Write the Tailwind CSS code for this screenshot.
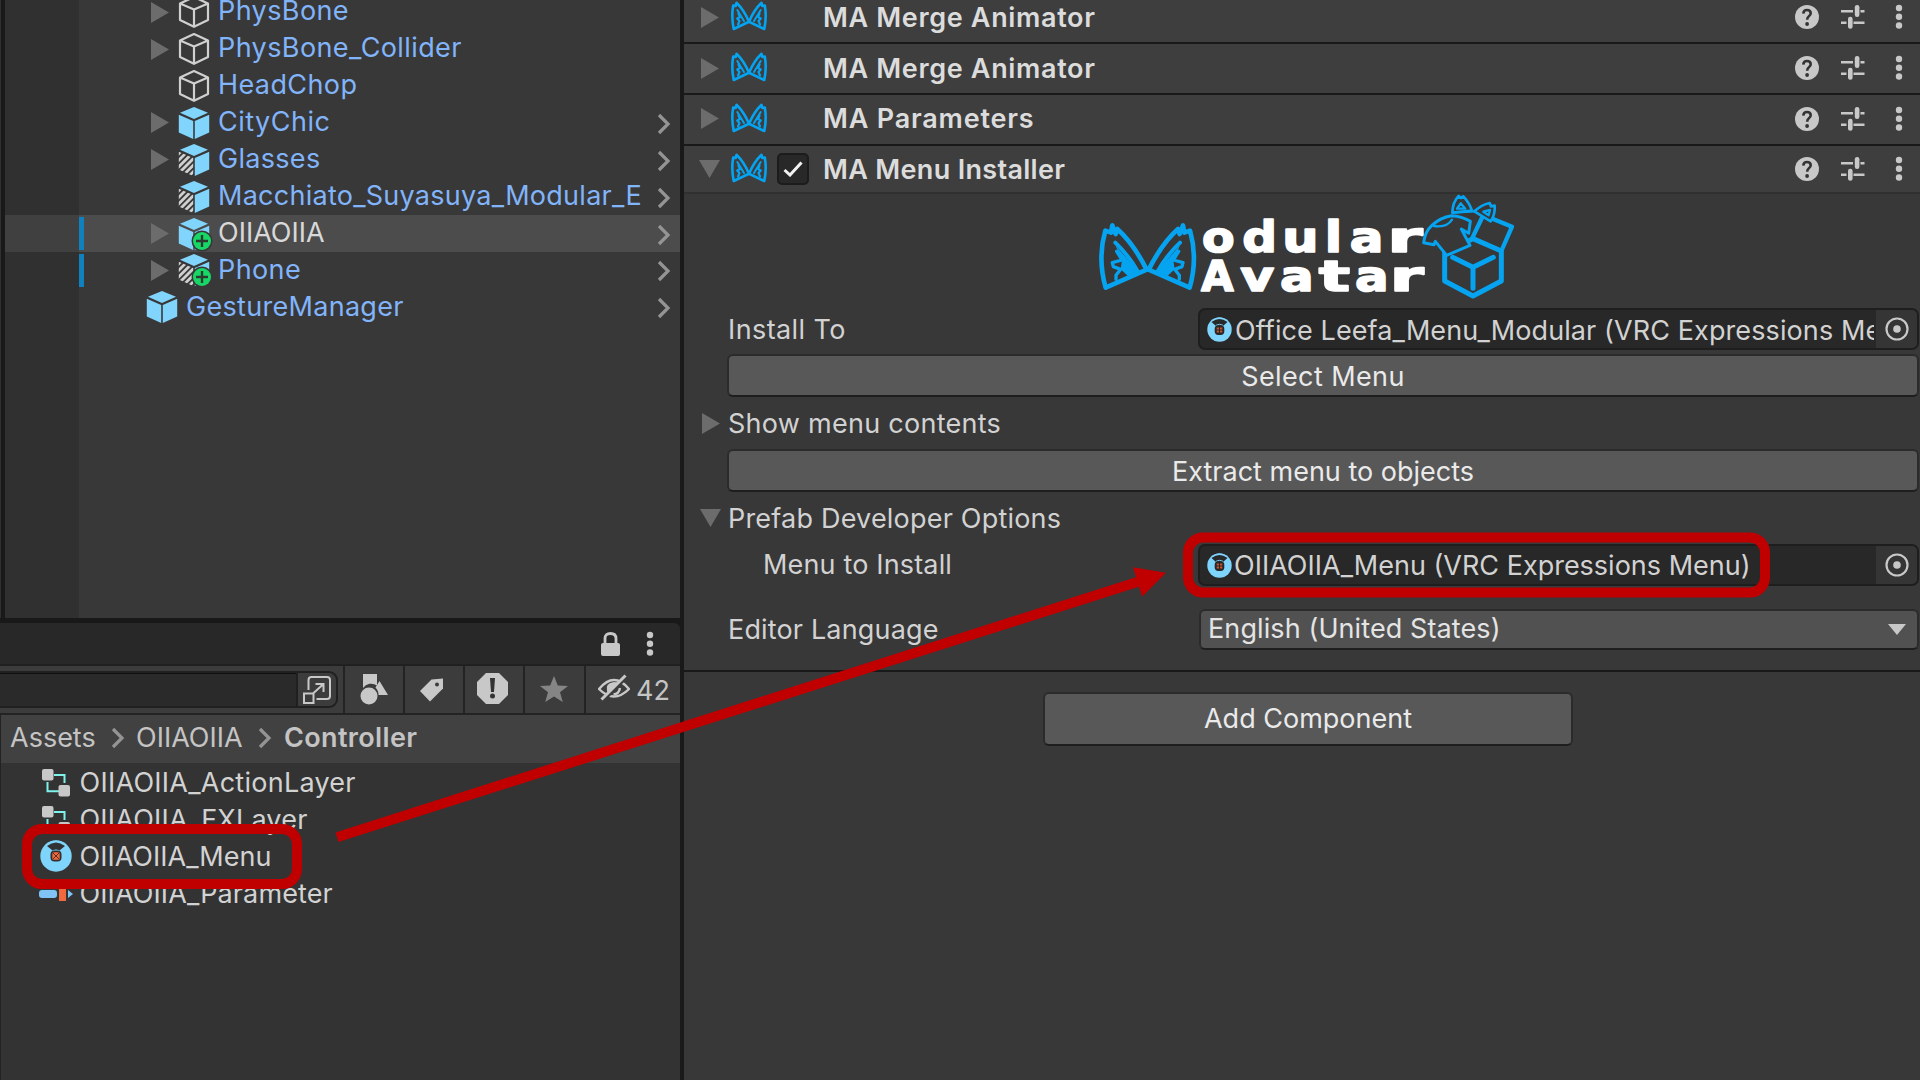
<!DOCTYPE html>
<html lang="en">
<head>
<meta charset="utf-8">
<title>Unity Editor</title>
<script src="https://cdn.jsdelivr.net/npm/@tailwindcss/browser@4"></script>
</head>
<body class="w-[1920px] h-[1080px] overflow-hidden bg-[#383838] font-['Inter',sans-serif] text-[27px] leading-none text-[#d2d2d2]">
<svg class="absolute w-0 h-0">
  <clipPath id="lf"><path d="M.8 8.800L15.200 15V33L.8 26.500Z"/></clipPath>
  <symbol id="tri" viewBox="0 0 18 21"><path d="M0 0L18 10.5L0 21Z" fill="#6c6c6c"/></symbol>
  <symbol id="trid" viewBox="0 0 21 18"><path d="M0 0H21L10.5 18Z" fill="#6c6c6c"/></symbol>
  <symbol id="chev" viewBox="0 0 14 22"><path d="M2 2L11 11L2 20" fill="none" stroke="#949494" stroke-width="3.2"/></symbol>
  <symbol id="cubeo" viewBox="0 0 32 34"><path d="M16 2L30 8.500V25L16 31.800L2 25V8.500ZM2 8.500L16 14.500L30 8.500M16 14.500V31.800" fill="none" stroke="#d0d0d0" stroke-width="2.200" stroke-linejoin="round"/></symbol>
  <symbol id="cube" viewBox="0 0 32 34"><path d="M16 1L30 6.800L16 13L2 6.800ZM.8 8.800L15.200 15V33L.8 26.500ZM16.800 15L31.200 8.800V26.500L16.800 33Z" fill="#81d5fd"/></symbol>
  <symbol id="cubev" viewBox="0 0 32 34"><path d="M16 1L30 6.800L16 13L2 6.800ZM16.800 15L31.200 8.800V26.500L16.800 33Z" fill="#81d5fd"/><path d="M-2 13.500L7 4.500M-3 21L13 5M-3 27.500L18 6.500M-2 33L20 11M3 34.500L20 17.500M9 35L22 22" clip-path="url(#lf)" stroke="#d0d0d0" stroke-width="2.700"/></symbol>
  <symbol id="plus" viewBox="0 0 22 22"><circle cx="11" cy="11" r="10.500" fill="#383838"/><circle cx="11" cy="11" r="9" fill="#17d866"/><path d="M11 5V17M5 11H17" stroke="#2c3a30" stroke-width="2.400"/></symbol>
  <symbol id="ear" viewBox="50 120 155 220"><g fill="none" stroke="#05a3f0" stroke-width="14" stroke-linejoin="round" stroke-linecap="round"><path d="M97 136L93 158L76 152Q52 235 77 323L200 269Q160 190 112 147L107 162Z"/><path d="M106 188Q145 225 172 272" stroke-width="12"/><path d="M110 214L126 240L97 248L100 260L122 268L108 286V298" stroke-width="10"/></g><path d="M106 196L176 276L146 290L122 268L126 240Z" fill="#05a3f0"/></symbol>
  <symbol id="ma" viewBox="50 124 306 212"><use href="#ear" x="50" y="120" width="155" height="220"/><use href="#ear" x="50" y="120" width="155" height="220" transform="translate(406 0) scale(-1 1)"/></symbol>
  <symbol id="mas" viewBox="0 0 36 30"><g id="hm" fill="none" stroke="#05a3f0" stroke-linejoin="round" stroke-linecap="round"><path d="M5.500 1.800L4.700 5L2.200 4.500Q.2 16 2.700 28L18 20.800Q13 9 5.500 1.800Z" stroke-width="2.600"/><path d="M6.300 9L13 20" stroke-width="2"/><path d="M7.500 12.500L9 16L6.200 17.500L8.500 20L7 23.500" stroke-width="2.200"/></g><use href="#hm" transform="translate(36 0) scale(-1 1)"/></symbol>
  <symbol id="help" viewBox="0 0 24 24"><circle cx="12" cy="12" r="12" fill="#c8c8c8"/><path d="M8.300 8.600Q8.500 5 12 5Q15.700 5 15.700 8.300Q15.700 10 13.900 11.300Q12.200 12.500 12.200 14.800" fill="none" stroke="#333" stroke-width="2.600"/><circle cx="12.100" cy="19" r="1.900" fill="#333"/></symbol>
  <symbol id="sld" viewBox="0 0 24 24"><path d="M0 6.300H12M19.500 6.300H23.500M0 17.800H5.500M12.500 17.800H23.500" stroke="#c8c8c8" stroke-width="2.400"/><rect x="13.800" y="0" width="4.600" height="12" rx="2.200" fill="#c8c8c8"/><rect x="7" y="11.800" width="4.600" height="12" rx="2.200" fill="#c8c8c8"/></symbol>
  <symbol id="dots" viewBox="0 0 8 26"><circle cx="4" cy="4" r="3.200" fill="#c8c8c8"/><circle cx="4" cy="12.700" r="3.200" fill="#c8c8c8"/><circle cx="4" cy="21.500" r="3.200" fill="#c8c8c8"/></symbol>
  <symbol id="menu" viewBox="0 0 32 32"><circle cx="16" cy="16" r="15.700" fill="#7fd4fc"/><path d="M7 6Q16 -1 25 6L19.500 10.500Q16 8.500 12.500 10.500Z" fill="#303234"/><path d="M6 4.700Q16 -2.500 26 4.700" fill="none" stroke="#7fd4fc" stroke-width="1.200"/><rect x="10.500" y="10.500" width="11" height="11" rx="4" fill="#303030"/><rect x="12.300" y="12.300" width="7.400" height="7.400" rx="1.500" fill="#f0683e"/><path d="M13 13L19 19M19 13L13 19" stroke="#5a3024" stroke-width="1"/></symbol>
  <symbol id="menus" viewBox="0 0 25 25"><circle cx="12.500" cy="12.500" r="12.200" fill="#7fd4fc"/><path d="M4.500 5Q12.500 -1 20.500 5L16 9H9Z" fill="#27292b"/><path d="M4.500 3.800Q12.500 -1.800 20.500 3.800" fill="none" stroke="#7fd4fc"/><path d="M9 8.300Q12.500 6.300 16 8.300" fill="none" stroke="#7fd4fc"/><rect x="7.700" y="8.300" width="9.600" height="9.600" rx="3.600" fill="#272727"/><path d="M9.700 10.500H12V12.500H9.700ZM13 10.500H15.300V12.500H13ZM9.700 13.500H12V15.500H9.700ZM13 13.500H15.300V15.500H13Z" fill="#c4532f"/></symbol>
  <symbol id="ctrl" viewBox="0 0 28 28"><path d="M12 6H22.500V14M5.500 13V22.300H17" fill="none" stroke="#7df3ec" stroke-width="2"/><rect x="0" y="0" width="11.500" height="11.500" rx="2" fill="#c8c8c8"/><rect x="16.500" y="16" width="11.500" height="11.500" rx="2" fill="#c8c8c8"/></symbol>
  <symbol id="pick" viewBox="0 0 24 24"><circle cx="12" cy="12" r="10.500" fill="none" stroke="#c8c8c8" stroke-width="2.200"/><circle cx="12" cy="12" r="3.800" fill="#c8c8c8"/></symbol>
</svg>

<div class="relative flex w-[1920px] h-[1080px] overflow-hidden">
  <!-- left column -->
  <div class="flex flex-col w-[680px] shrink-0">
    <!-- hierarchy -->
    <div class="flex h-[618px] overflow-hidden">
      <div class="w-px bg-[#303030]"></div><div class="w-[4px] bg-[#191919]"></div>
      <div class="flex-1 min-w-0 bg-[linear-gradient(to_right,#303030_74px,#383838_74px)]">
        <div class="-mt-[6.2px] text-[#82b4fa]">
          <div class="flex items-center h-[36.9px] pl-[146px]"><svg class="w-[18px] h-[21px]"><use href="#tri"/></svg><svg class="w-8 h-[34px] ml-[9px]"><use href="#cubeo"/></svg><span class="ml-[8px] pb-[3px] tracking-[0.4px]">PhysBone</span></div>
          <div class="flex items-center h-[36.9px] pl-[146px]"><svg class="w-[18px] h-[21px]"><use href="#tri"/></svg><svg class="w-8 h-[34px] ml-[9px]"><use href="#cubeo"/></svg><span class="ml-[8px] pb-[3px] tracking-[0.4px]">PhysBone_Collider</span></div>
          <div class="flex items-center h-[36.9px] pl-[173px]"><svg class="w-8 h-[34px]"><use href="#cubeo"/></svg><span class="ml-[8px] pb-[3px] tracking-[0.4px]">HeadChop</span></div>
          <div class="flex items-center h-[36.9px] pl-[146px] pr-[9.5px]"><svg class="w-[18px] h-[21px]"><use href="#tri"/></svg><svg class="w-8 h-[34px] ml-[9px]"><use href="#cube"/></svg><span class="ml-[8px] pb-[3px] tracking-[0.5px]">CityChic</span><svg class="w-[14px] h-[22px] ml-auto mt-[2px]"><use href="#chev"/></svg></div>
          <div class="flex items-center h-[36.9px] pl-[146px] pr-[9.5px]"><svg class="w-[18px] h-[21px]"><use href="#tri"/></svg><svg class="w-8 h-[34px] ml-[9px]"><use href="#cubev"/></svg><span class="ml-[8px] pb-[3px] tracking-[0.3px]">Glasses</span><svg class="w-[14px] h-[22px] ml-auto mt-[2px]"><use href="#chev"/></svg></div>
          <div class="flex items-center h-[36.9px] pl-[173px] pr-[9.5px]"><svg class="w-8 h-[34px]"><use href="#cubev"/></svg><span class="ml-[8px] pb-[3px] tracking-[0.26px]">Macchiato_Suyasuya_Modular_E</span><svg class="w-[14px] h-[22px] ml-auto mt-[2px]"><use href="#chev"/></svg></div>
          <div class="flex items-center h-[36.9px] pl-[74px] pr-[9.5px] bg-[linear-gradient(to_right,#404040_74px,#4c4c4c_74px)] text-[#d8d8d8]"><div class="w-[5px] h-[33px] bg-[#0f81be]"></div><svg class="w-[18px] h-[21px] ml-[67px]"><use href="#tri"/></svg><div class="relative w-8 h-[34px] ml-[9px]"><svg class="w-8 h-[34px]"><use href="#cube"/></svg><svg class="absolute left-[13px] top-[13px] w-[22px] h-[22px]"><use href="#plus"/></svg></div><span class="ml-[8px] pb-[3px]">OIIAOIIA</span><svg class="w-[14px] h-[22px] ml-auto mt-[2px]"><use href="#chev"/></svg></div>
          <div class="flex items-center h-[36.9px] pl-[74px] pr-[9.5px]"><div class="w-[5px] h-[33px] bg-[#0f81be]"></div><svg class="w-[18px] h-[21px] ml-[67px]"><use href="#tri"/></svg><div class="relative w-8 h-[34px] ml-[9px]"><svg class="w-8 h-[34px]"><use href="#cubev"/></svg><svg class="absolute left-[13px] top-[13px] w-[22px] h-[22px]"><use href="#plus"/></svg></div><span class="ml-[8px] pb-[2px] tracking-[0.4px]">Phone</span><svg class="w-[14px] h-[22px] ml-auto mt-[2px]"><use href="#chev"/></svg></div>
          <div class="flex items-center h-[36.9px] pl-[141px] pr-[9.5px]"><svg class="w-8 h-[34px]"><use href="#cube"/></svg><span class="ml-[8px] pb-[2px] tracking-[0.3px]">GestureManager</span><svg class="w-[14px] h-[22px] ml-auto mt-[2px]"><use href="#chev"/></svg></div>
        </div>
      </div>
    </div>
    <!-- project -->
    <div class="h-[5px] bg-[#191919]"></div>
    <div class="bg-[#191919]"><div class="flex items-center justify-end h-[43px] pr-[26px] gap-[26px] bg-[#282828] rounded-tr-[6px] border-b-2 border-[#202020]">
      <svg class="w-[19px] h-[24px]" viewBox="0 0 19 24"><path d="M4 12V6.500Q4 1.500 9.500 1.500T15 6.500V12" fill="none" stroke="#c8c8c8" stroke-width="2.800"/><rect y="11" width="19" height="13" rx="2" fill="#c8c8c8"/></svg>
      <svg class="w-2 h-[26px]"><use href="#dots"/></svg>
    </div></div>
    <div class="flex h-[49px] bg-[#3c3c3c] border-b-2 border-[#232323]">
      <div class="flex items-center w-[343px]"><div class="flex w-[338px] h-[37px] border-2 border-l-0 border-[#202020] rounded-r-[9px] bg-[#2a2a2a] overflow-hidden"><div class="w-[298px] border-r-2 border-[#202020] shadow-[inset_0_1px_0_#101010]"></div><div class="flex items-center justify-center flex-1 bg-[#3c3c3c]"><svg class="w-7 h-7" viewBox="0 0 28 28" fill="none" stroke="#c8c8c8" stroke-width="2"><path d="M5.500 14V4Q5.500 1 8.500 1H24Q27 1 27 4V20Q27 23 24 23H13.500M1 17.500H10.500V27H1ZM10 17.500L20.500 8M12.500 8H20.500V16"/></svg></div></div></div>
      <div class="flex items-center justify-center w-[60px] border-l-2 border-[#232323]"><svg class="w-7 h-[31px] -ml-px" viewBox="0 0 28 31" fill="#c8c8c8"><path d="M3 0H17V11.500A10 10 0 0 0 3 14Z"/><circle cx="9" cy="22" r="8.500"/><path d="M19.500 7L28 21H18.500A10 10 0 0 0 15.500 13.500Z"/></svg></div>
      <div class="flex items-center justify-center w-[60px] border-l-2 border-[#232323]"><svg class="w-6 h-6 -ml-1" viewBox="0 0 24 24"><path d="M0 13L11.500 1.500L23 .5V10.500L10 23.500Z" fill="#c8c8c8"/><circle cx="17" cy="6.500" r="2" fill="#3c3c3c"/></svg></div>
      <div class="flex items-center justify-center w-[60px] border-l-2 border-[#232323]"><svg class="w-[31px] h-[31px] -mt-[2px] -ml-[3px]" viewBox="0 0 31 31"><path d="M9 0H22L31 9V22L22 31H9L0 22V9Z" fill="#c8c8c8"/><path d="M13 5H18L17 19H14Z" fill="#333"/><circle cx="15.500" cy="23" r="2.500" fill="#333"/></svg></div>
      <div class="flex items-center justify-center w-[61px] border-l-2 border-[#232323]"><svg class="w-7 h-[26px] -ml-px -mt-px" viewBox="0 0 28 26"><path d="M14 0L17.800 9.500L28 10L20 16.300L22.800 26L14 20.500L5.200 26L8 16.300L0 10L10.200 9.500Z" fill="#858585"/></svg></div>
      <div class="flex items-center flex-1 border-l-2 border-[#232323] pl-[12px]"><svg class="w-8 h-[28px] -mt-1" viewBox="0 0 32 28"><path d="M1 15Q16 -3 31 15Q16 30 1 15Z" fill="none" stroke="#c8c8c8" stroke-width="2.400"/><path d="M9 17Q7 9 16 8Q20 8 22 10L11 21Z" fill="#c8c8c8"/><path d="M22 14Q21 20 15.500 20.500" fill="none" stroke="#c8c8c8" stroke-width="2.400"/><path d="M5 27L28 4" stroke="#3c3c3c" stroke-width="3"/><path d="M3.500 25.500L27.500 1.500" stroke="#c8c8c8" stroke-width="3"/></svg><span class="ml-[6px] pt-px text-[#c4c4c4]">42</span></div>
    </div>
    <div class="flex flex-col flex-1 border-l border-[#232323] bg-[#333]">
      <div class="flex items-center h-[48px] pl-[9px] pb-[3px] bg-[#414141] text-[#c4c4c4]"><span class="w-[101px]">Assets</span><svg class="w-[14px] h-[22px] mt-px"><use href="#chev"/></svg><span class="ml-[11px] w-[122px]">OIIAOIIA</span><svg class="w-[14px] h-[22px] mt-px"><use href="#chev"/></svg><span class="ml-[12px] font-semibold tracking-[0.35px]">Controller</span></div>
      <div class="pt-px text-[#d2d2d2]">
        <div class="flex items-center h-[37px] pl-[41px]"><svg class="w-7 h-7"><use href="#ctrl"/></svg><span class="ml-[9.5px] tracking-[0.26px]">OIIAOIIA_ActionLayer</span></div>
        <div class="flex items-center h-[37px] pl-[41px]"><svg class="w-7 h-7"><use href="#ctrl"/></svg><span class="ml-[9.5px] tracking-[0.2px]">OIIAOIIA_FXLayer</span></div>
        <div class="flex items-center h-[37px] pl-[39px]"><svg class="w-8 h-8 -mt-px"><use href="#menu"/></svg><span class="ml-[7.5px]">OIIAOIIA_Menu</span></div>
        <div class="flex items-center h-[37px] pl-[38px]"><svg class="w-[34px] h-[14px]" viewBox="0 0 34 14"><rect y="3" width="18" height="8" rx="3" fill="#7fc4f4"/><rect x="20" width="7" height="14" fill="#f0683e"/><path d="M29 3L34 7L29 11Z" fill="#7fc4f4"/></svg><span class="ml-[6.5px] tracking-[0.1px]">OIIAOIIA_Parameter</span></div>
      </div>
    </div>
  </div>
  <div class="w-[4px] bg-[#191919]"></div>

  <!-- inspector -->
  <div class="flex-1 min-w-0">
    <div class="flex flex-col text-[#dcdcdc] font-semibold">
      <div class="flex items-center h-[44px] pl-[17px] pr-[17px] pb-[8px] bg-[#3e3e3e] border-b-2 border-[#191919]"><svg class="w-[18px] h-[21px]"><use href="#tri"/></svg><svg class="w-9 h-[30px] ml-[12px] -mt-[2px]"><use href="#mas"/></svg><span class="ml-[56px] tracking-[0.65px]">MA Merge Animator</span><svg class="w-6 h-6 ml-auto"><use href="#help"/></svg><svg class="w-6 h-6 ml-[22px]"><use href="#sld"/></svg><svg class="w-2 h-[26px] ml-[30px]"><use href="#dots"/></svg></div>
      <div class="flex items-center h-[51px] pl-[17px] pr-[17px] pb-px bg-[#3e3e3e] border-b-2 border-[#191919]"><svg class="w-[18px] h-[21px]"><use href="#tri"/></svg><svg class="w-9 h-[30px] ml-[12px] -mt-[2px]"><use href="#mas"/></svg><span class="ml-[56px] tracking-[0.65px]">MA Merge Animator</span><svg class="w-6 h-6 ml-auto"><use href="#help"/></svg><svg class="w-6 h-6 ml-[22px]"><use href="#sld"/></svg><svg class="w-2 h-[26px] ml-[30px]"><use href="#dots"/></svg></div>
      <div class="flex items-center h-[51px] pl-[17px] pr-[17px] pb-[2px] bg-[#3e3e3e] border-b-2 border-[#191919]"><svg class="w-[18px] h-[21px]"><use href="#tri"/></svg><svg class="w-9 h-[30px] ml-[12px] -mt-[2px]"><use href="#mas"/></svg><span class="ml-[56px] tracking-[0.8px]">MA Parameters</span><svg class="w-6 h-6 ml-auto"><use href="#help"/></svg><svg class="w-6 h-6 ml-[22px]"><use href="#sld"/></svg><svg class="w-2 h-[26px] ml-[30px]"><use href="#dots"/></svg></div>
      <div class="flex items-center h-[48px] pl-[15px] pr-[17px] bg-[#3e3e3e] border-b-2 border-[#303030]"><svg class="w-[21px] h-[18px]"><use href="#trid"/></svg><svg class="w-9 h-[30px] ml-[11px] -mt-[2px]"><use href="#mas"/></svg><div class="flex items-center justify-center w-8 h-8 ml-[10px] rounded-[5px] bg-[#282828] border-2 border-[#1c1c1c]"><svg class="w-5 h-4" viewBox="0 0 20 16"><path d="M1.500 9L7 14L18.500 1.500" fill="none" stroke="#f2f2f2" stroke-width="3"/></svg></div><span class="ml-[14px] tracking-[0.32px]">MA Menu Installer</span><svg class="w-6 h-6 ml-auto"><use href="#help"/></svg><svg class="w-6 h-6 ml-[22px]"><use href="#sld"/></svg><svg class="w-2 h-[26px] ml-[30px]"><use href="#dots"/></svg></div>
    </div>

    <svg class="block w-[460px] h-[107px] ml-[396px] -mt-px" viewBox="0 39 1380 321">
      <use href="#ma" x="50" y="124" width="306" height="212"/>
      <g font-family="DejaVu Sans" font-weight="700" font-size="130" fill="#fff" stroke="#fff" stroke-width="5" stroke-linejoin="round">
        <text y="215"><tspan x="366" textLength="98" lengthAdjust="spacingAndGlyphs">o</tspan><tspan x="487" textLength="104" lengthAdjust="spacingAndGlyphs">d</tspan><tspan x="607" textLength="109" lengthAdjust="spacingAndGlyphs">u</tspan><tspan x="734" textLength="52" lengthAdjust="spacingAndGlyphs">l</tspan><tspan x="809" textLength="101" lengthAdjust="spacingAndGlyphs">a</tspan><tspan x="922" textLength="106" lengthAdjust="spacingAndGlyphs">r</tspan></text>
        <text y="334"><tspan x="363" textLength="98" lengthAdjust="spacingAndGlyphs">A</tspan><tspan x="481" textLength="102" lengthAdjust="spacingAndGlyphs">v</tspan><tspan x="600" textLength="101" lengthAdjust="spacingAndGlyphs">a</tspan><tspan x="716" textLength="94" lengthAdjust="spacingAndGlyphs">t</tspan><tspan x="825" textLength="101" lengthAdjust="spacingAndGlyphs">a</tspan><tspan x="929" textLength="102" lengthAdjust="spacingAndGlyphs">r</tspan></text>
      </g>
      <g fill="#383838" stroke="#05a3f0" stroke-linejoin="round" stroke-linecap="round">
        <path d="M1210 105L1296 140L1264 213L1176 176Z" stroke-width="13"/>
        <path d="M1094 215V303L1179 348L1264 303V213L1179 176Z" stroke-width="15"/>
        <path d="M1118 232L1179 262L1240 232M1179 262V325" fill="none" stroke-width="15"/>
        <path d="M1117 98Q1118 66 1136 48L1142 54L1150 49Q1168 68 1176 92ZM1183 94Q1205 74 1229 69L1233 79L1244 77Q1246 104 1232 124Z" stroke-width="8"/>
        <path d="M1131 86L1142 70L1156 86ZM1210 95L1230 90L1226 106Z" stroke-width="7"/>
        <path d="M1055 137Q1080 112 1115 107Q1145 108 1171 124L1166 160L1144 147L1170 196L1100 226L1066 184L1062 194L1031 188Q1035 155 1055 137Z" stroke-width="9"/>
        <path d="M1062 138Q1100 144 1116 119M1120 98L1183 94" fill="none" stroke-width="7"/>
      </g>
    </svg>

    <div class="flex flex-col pl-[43px] pr-px pt-[8px]">
      <div class="flex items-center h-[42px]"><span class="w-[470px] ml-[1px] tracking-[0.4px]">Install To</span>
        <div class="flex items-center flex-1 min-w-0 h-[42px] bg-[#282828] border-2 border-[#1e1e1e] rounded-[7px] overflow-hidden pl-[7px]"><svg class="w-[25px] h-[25px] shrink-0"><use href="#menus"/></svg><div class="ml-[3px] mt-[3px] w-[639px] overflow-hidden whitespace-nowrap leading-[36px] tracking-[0.1px]">Office Leefa_Menu_Modular (VRC Expressions Menu)</div><div class="flex items-center justify-center flex-1 self-stretch bg-[#353535] ml-[2px]"><svg class="w-6 h-6 -mt-px"><use href="#pick"/></svg></div></div></div>
      <div class="flex items-center justify-center h-[43px] mt-[4px] bg-[#585858] border-2 border-[#2b2b2b] border-b-[#1e1e1e] rounded-[6px] text-[#eaeaea]"><span class="pt-px tracking-[0.4px]">Select Menu</span></div>
      <div class="flex items-center h-[52px] -ml-[25px]"><svg class="w-[18px] h-[21px]"><use href="#tri"/></svg><span class="ml-[8px] tracking-[0.27px]">Show menu contents</span></div>
      <div class="flex items-center justify-center h-[43px] bg-[#585858] border-2 border-[#2b2b2b] border-b-[#1e1e1e] rounded-[6px] text-[#eaeaea]"><span class="pt-px">Extract menu to objects</span></div>
      <div class="flex items-center h-[52px] -ml-[27px]"><svg class="w-[21px] h-[18px]"><use href="#trid"/></svg><span class="ml-[7px] tracking-[0.2px]">Prefab Developer Options</span></div>
      <div class="flex items-center h-[42px]"><span class="w-[435px] ml-[36px] pb-px tracking-[0.16px]">Menu to Install</span>
        <div class="flex items-center flex-1 min-w-0 h-[42px] bg-[#282828] border-2 border-[#1e1e1e] rounded-[7px] overflow-hidden pl-[7px]"><svg class="w-[25px] h-[25px] shrink-0"><use href="#menus"/></svg><div class="ml-[2px] mt-[2px] w-[640px] overflow-hidden whitespace-nowrap leading-[36px]">OIIAOIIA_Menu (VRC Expressions Menu)</div><div class="flex items-center justify-center flex-1 self-stretch bg-[#353535] ml-[2px]"><svg class="w-6 h-6 -mt-px"><use href="#pick"/></svg></div></div></div>
      <div class="flex items-center h-[41px] mt-[23px]"><span class="w-[471px] ml-[1px] tracking-[0.16px]">Editor Language</span>
        <div class="flex items-center justify-between flex-1 h-[41px] bg-[#515151] border-2 border-[#2b2b2b] border-b-[#1e1e1e] rounded-[6px] pl-[7px] pr-[11px] text-[#e4e4e4]"><span class="pb-[2px] tracking-[0.1px]">English (United States)</span><svg class="w-[18px] h-[11px]" viewBox="0 0 18 11"><path d="M0 0H18L9 11Z" fill="#c8c8c8"/></svg></div></div>
    </div>
    <div class="h-[2px] mt-[20px] bg-[#191919]"></div>
    <div class="flex items-center justify-center w-[530px] h-[54px] mt-[20px] ml-[359px] bg-[#585858] border-2 border-[#2b2b2b] border-b-[#1e1e1e] rounded-[6px] text-[#eaeaea]"><span class="pb-px">Add Component</span></div>
  </div>

  <!-- annotations over the editor -->
  <svg class="absolute inset-0 w-[1920px] h-[1080px]" viewBox="0 0 1920 1080" fill="none" stroke="#c00000" stroke-width="10">
    <rect x="27" y="829" width="270" height="55" rx="15"/>
    <rect x="1188" y="537.500" width="577" height="55" rx="15"/>
    <path d="M337 837.300L1142 580.500"/>
    <path d="M1166 572.700L1133 567.300L1142 596.700Z" fill="#c00000" stroke="none"/>
  </svg>
</div>
</body>
</html>
